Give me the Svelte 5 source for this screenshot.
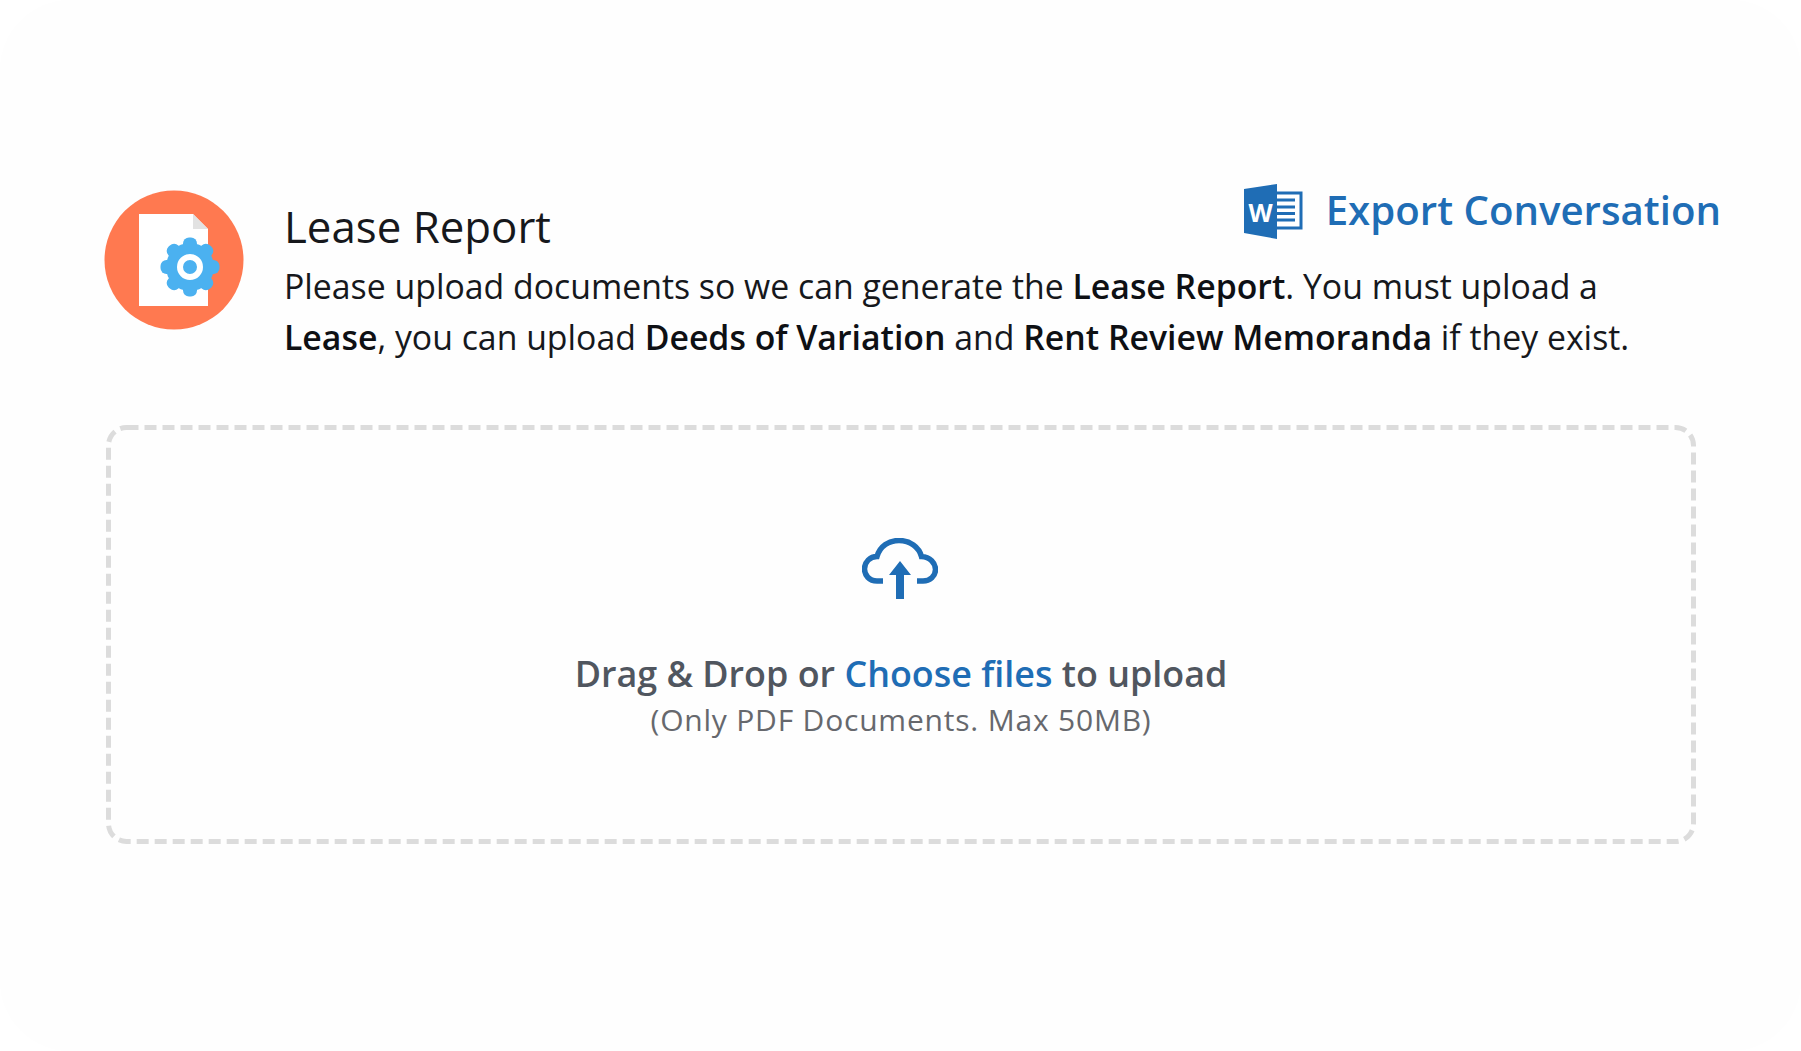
<script>
  let title = 'Lease Report';
  // gear teeth, one every 45deg
  const teeth = [0, 45, 90, 135];
</script>

<div class="screen">
  <section class="panel">
    <header class="report-head">
      <svg class="report-icon" viewBox="0 0 140 140" aria-hidden="true">
        <circle cx="70" cy="70" r="69.500" fill="#ff7950" />
        <path d="M35 24H89L104 39V116H35Z" fill="#fff" />
        <path d="M89 24L104 39H89Z" fill="#e2e2e2" />
        <g fill="#4bb1f0">
          <circle cx="86" cy="77" r="24" />
          {#each teeth as angle}
            <rect x="79" y="47.500" width="14" height="59" rx="6" transform="rotate({angle} 86 77)" />
          {/each}
        </g>
        <circle cx="86" cy="77" r="10" fill="#4bb1f0" stroke="#fff" stroke-width="6" />
      </svg>

      <div class="report-text">
        <div class="title-row">
          <h1>{title}</h1>
          <a class="export" href="#export">
            <svg class="word-icon" viewBox="0 0 60 58" aria-hidden="true">
              <path d="M30 10H57V45H30Z" fill="#fff" stroke="#1f6db5" stroke-width="3" />
              <path d="M30 17H51M30 24H51M30 30.500H51M30 37H51" stroke="#1f6db5" stroke-width="3" />
              <path d="M0 6L33 1V56L0 50Z" fill="#1f6db5" />
              <text class="word-w" x="16.500" y="39" text-anchor="middle">W</text>
            </svg>
            <span>Export Conversation</span>
          </a>
        </div>
        <p>
          Please upload documents so we can generate the <b>Lease Report</b>. You must upload a
          <b>Lease</b>, you can upload <b>Deeds of Variation</b> and <b>Rent Review Memoranda</b> if they exist.
        </p>
      </div>
    </header>

    <div class="dropzone">
      <svg class="dashes" aria-hidden="true">
        <rect x="2.500" y="2.500" width="1585" height="414" rx="18" />
      </svg>
      <svg class="cloud" viewBox="0 0 76 62" aria-hidden="true">
        <path d="M21 43H15C7 43 2.500 37 2.500 31C2.500 24 8 18.500 15 18.500C18 8 27 2.500 37 2.500C48 2.500 57 9 59.500 18.500C68 19 73.500 25 73.500 31.500C73.500 38 68 43 61 43H55" fill="none" stroke="#1f6db5" stroke-width="5.500" />
        <path d="M38 23L49 37H42V61H34V37H27Z" fill="#1f6db5" />
      </svg>
      <div class="drop-main">Drag &amp; Drop or <a href="#choose">Choose files</a> to upload</div>
      <div class="drop-sub">(Only PDF Documents. Max 50MB)</div>
    </div>
  </section>
</div>

<style>
  :global(body) {
    margin: 0;
    background: #fff;
  }

  .screen {
    width: 1801px;
    height: 1051px;
    overflow: hidden;
    font-family: "Open Sans", "Noto Sans", sans-serif;
  }

  .panel {
    box-sizing: border-box;
    height: 1051px;
    padding: 190px 80px 0 104px;
    border-radius: 70px;
    background: #fefefe;
  }

  .report-head {
    display: flex;
    align-items: flex-start;
    gap: 40px;
  }

  .report-icon {
    flex: none;
    width: 140px;
    height: 140px;
  }

  .report-text {
    flex: 1;
    min-width: 0;
  }

  .title-row {
    display: flex;
    justify-content: space-between;
    align-items: flex-start;
    height: 71px;
  }

  h1 {
    margin: 11px 0 0;
    font-size: 43.800px;
    line-height: 50px;
    font-weight: 400;
    color: #16181c;
  }

  .export {
    display: flex;
    align-items: center;
    gap: 22px;
    margin-top: -11px;
    font-size: 40.200px;
    line-height: 58px;
    font-weight: 600;
    color: #1f6db5;
    text-decoration: none;
  }

  .word-icon {
    width: 60px;
    height: 58px;
    margin-top: 4px;
  }

  .word-w {
    font-size: 25px;
    font-weight: 700;
    fill: #fff;
  }

  p {
    margin: 0;
    width: 1420px;
    font-size: 33.800px;
    line-height: 51px;
    color: #16181c;
  }

  b {
    font-weight: 600;
    color: #0e1014;
  }

  .dropzone {
    position: relative;
    display: flex;
    flex-direction: column;
    align-items: center;
    box-sizing: border-box;
    width: 1590px;
    height: 419px;
    margin: 62px 0 0 2px;
    padding-top: 112px;
  }

  .dashes {
    position: absolute;
    inset: 0;
    width: 100%;
    height: 100%;
  }

  .dashes rect {
    fill: none;
    stroke: #dcdcdc;
    stroke-width: 5;
    stroke-dasharray: 12 6;
  }

  .cloud {
    width: 76px;
    height: 62px;
    margin: 1px 2px 0 0;
  }

  .drop-main {
    margin-top: 51px;
    font-size: 35.900px;
    line-height: 46px;
    font-weight: 600;
    color: #50565f;
  }

  .drop-main a {
    color: #1f6db5;
    text-decoration: none;
  }

  .drop-sub {
    margin-top: 1px;
    font-size: 30px;
    line-height: 44px;
    letter-spacing: 0.800px;
    color: #66686d;
  }
</style>
